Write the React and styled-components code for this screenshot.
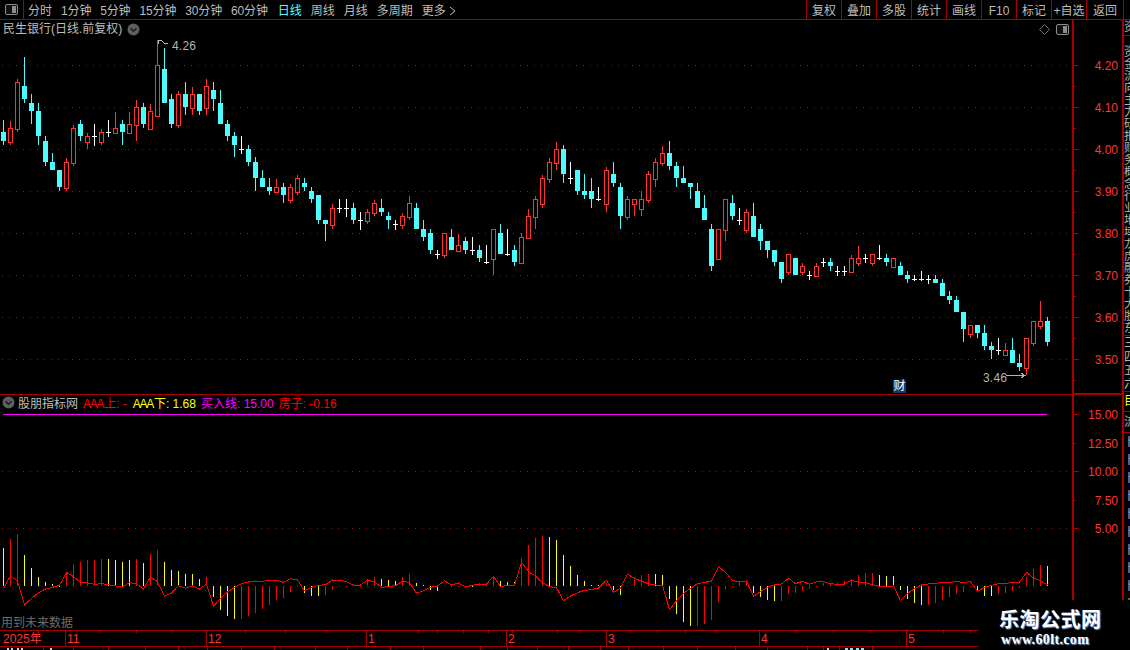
import React from "react";
import styled, { createGlobalStyle } from "styled-components";

const RED_LINE = "#a80000";
const GRID = "#8c1616";
const SANS = `"Liberation Sans", "Noto Sans CJK SC", sans-serif`;

const GlobalStyle = createGlobalStyle`
  html, body { margin: 0; padding: 0; background: #000; }
  body { font-family: ${SANS}; }
`;

const Page = styled.div`
  position: relative;
  width: 1130px;
  height: 650px;
  overflow: hidden;
  background: #000;
  color: #bdbdbd;
  font-size: 12px;
  display: flex;
  flex-direction: column;
`;

const Toolbar = styled.div`
  height: 19px;
  flex: none;
  display: flex;
  align-items: stretch;
  border-bottom: 1px solid ${RED_LINE};
`;
const LayoutCell = styled.div`
  width: 23px;
  display: flex;
  align-items: center;
  justify-content: center;
  border-right: 1px solid ${RED_LINE};
`;
const PeriodList = styled.div`
  display: flex;
  align-items: center;
  gap: 9px;
  margin-left: 4px;
  padding-top: 3px;
  box-sizing: border-box;
`;
const PeriodTab = styled.span`
  color: ${(p) => (p.$active ? "#55ffff" : "#bdbdbd")};
  white-space: nowrap;
  line-height: 16px;
  letter-spacing: ${(p) => (p.$digits ? "-0.15px" : "0")};
  margin-left: ${(p) => (p.$active ? "1px" : "0")};
`;
const MoreTab = styled(PeriodTab)`
  display: inline-flex;
  align-items: center;
  gap: 3px;
`;
const ActionGroup = styled.div`
  margin-left: auto;
  margin-right: 6px;
  display: flex;
  border-right: 1px solid ${RED_LINE};
`;
const ActionButton = styled.div`
  width: ${(p) => (p.$wide ? 36 : 34)}px;
  border-left: 1px solid ${RED_LINE};
  display: flex;
  align-items: center;
  justify-content: center;
  white-space: nowrap;
  line-height: 16px;
  padding-top: 3px;
`;

const Workspace = styled.div`
  flex: 1;
  min-height: 0;
  display: flex;
`;
const ChartColumn = styled.div`
  width: 1072px;
  flex: none;
  display: flex;
  flex-direction: column;
`;
const PricePane = styled.div`
  position: relative;
  height: 374px;
  flex: none;
  border-bottom: 1px solid ${RED_LINE};
`;
const IndicatorPane = styled.div`
  position: relative;
  height: 235px;
  flex: none;
`;
const ChartSvg = styled.svg`
  display: block;
  flex: none;
  shape-rendering: crispEdges;
`;
const PaneTitle = styled.div`
  position: absolute;
  left: 3px;
  top: 1px;
  display: flex;
  align-items: center;
  gap: 5px;
  line-height: 16px;
  white-space: nowrap;
`;
const PaneTools = styled.div`
  position: absolute;
  right: 3px;
  top: 4px;
  display: flex;
  align-items: center;
  gap: 6px;
`;
const EventBadge = styled.div`
  position: absolute;
  left: 893px;
  top: 360px;
  width: 13px;
  height: 13px;
  background: #0b3c6c;
  color: #fff;
  line-height: 13px;
  text-align: center;
`;
const Legend = styled.div`
  position: absolute;
  left: 2px;
  top: -1px;
  display: flex;
  align-items: center;
  height: 16px;
  white-space: nowrap;
`;
const LegendName = styled.span`
  margin: 0 5px 0 3px;
`;
const LegendItem = styled.span`
  color: ${(p) => p.$color};
  margin-right: ${(p) => p.$gap}px;
`;
const TightLatin = styled.span`
  letter-spacing: -1.3px;
  margin-right: 1px;
`;
const FutureNote = styled.div`
  position: absolute;
  left: 1px;
  bottom: -1px;
  color: #6c6c6c;
  line-height: 16px;
`;
const DateAxis = styled.div`
  flex: 1;
  min-height: 0;
`;
const AxisColumn = styled.div`
  width: 48px;
  flex: none;
  border-left: 2px solid ${RED_LINE};
  display: flex;
  flex-direction: column;
`;
const IndicatorScale = styled(ChartSvg)`
  border-top: 2px solid ${RED_LINE};
`;
const AxisText = styled.text`
  fill: #ff3434;
  font-family: ${SANS};
  font-size: 12px;
  text-anchor: ${(p) => p.$anchor || "end"};
  shape-rendering: auto;
`;
const MarkText = styled.text`
  fill: #b4b4b4;
  font-family: ${SANS};
  font-size: 12px;
  letter-spacing: 0.2px;
`;

const SideStrip = styled.div`
  width: 6px;
  flex: none;
  border-left: 2px solid ${RED_LINE};
  display: flex;
  flex-direction: column;
  overflow: hidden;
`;
const StripRow = styled.div`
  height: ${(p) => p.$h}px;
  flex: none;
  overflow: hidden;
  white-space: nowrap;
  line-height: ${(p) => p.$h}px;
  font-size: 12px;
  color: ${(p) => p.$color || "#b4b4b4"};
  border-bottom: ${(p) => (p.$line ? `1px solid ${RED_LINE}` : "0")};
`;

const Watermark = styled.div`
  position: absolute;
  left: 978px;
  top: 600px;
  width: 152px;
  height: 50px;
  background: #000;
  color: #fff;
  display: flex;
  flex-direction: column;
  align-items: flex-start;
  padding: 7px 0 0 21px;
  box-sizing: border-box;
`;
const WatermarkTitle = styled.div`
  font-family: "Noto Sans CJK SC", sans-serif;
  font-weight: 700;
  font-size: 20px;
  line-height: 23px;
  letter-spacing: 0.5px;
  text-shadow: 1px 1px 1px #6f8fc0;
`;
const WatermarkUrl = styled.div`
  font-family: "Liberation Serif", serif;
  font-weight: 700;
  font-size: 14px;
  line-height: 16px;
  letter-spacing: 0.35px;
  margin: 2px 0 0 2px;
  text-shadow: 1px 1px 1px #6f8fc0;
`;

/* ---------- data: traced in 3x crop units, converted with an offset ---------- */
const seg = (off, rows) =>
  rows.map(([k, h, t, b, l]) => ({
    k,
    h: Math.round(off + h / 3),
    t: Math.round(off + t / 3),
    b: Math.round(off + b / 3),
    l: Math.round(off + l / 3),
  }));
const C = "c", R = "r", W = "w";
const candles = [
  ...seg(40, [
    [C,240,276,303,315],[R,243,264,306,315],[R,117,126,266,276],[C,51,138,177,189],[C,162,189,213,252],
    [C,189,213,288,315],[C,288,303,366,378],[C,339,366,390,390],[C,390,390,441,453],[R,354,366,443,453],
    [R,255,264,369,378],[C,240,252,288,303],[R,279,288,305,327],[W,252,288,288,315],[R,267,276,306,315],
    [W,240,276,276,288],[R,216,264,278,278],[C,240,252,276,315],[R,216,252,278,278],[R,180,201,254,303],
    [C,189,201,252,264],[R,192,213,266,266],[R,0,75,228,228],[C,24,87,189,189],[C,162,177,252,264],
    [R,153,162,254,264],[C,126,162,201,225],[R,141,162,204,225],[C,162,162,213,225],[R,117,138,204,225],
    [C,126,150,177,213],[C,150,189,252,252],[C,240,252,288,303],[C,276,288,315,351],[W,288,327,327,339],
    [C,315,327,366,378],[C,351,366,414,453],[C,390,414,441,441],[C,414,441,453,465],
  ]),
  ...seg(140, [
    [R,117,141,156,156],[C,129,141,165,189],[R,132,141,180,189],[R,105,114,156,165],[C,114,129,141,153],
    [C,141,153,177,189],[C,165,165,240,252],[C,240,240,252,303],[R,192,204,255,267],[W,177,204,204,216],
    [W,177,204,204,228],[C,189,204,240,252],[W,216,240,240,267],[R,207,216,243,252],[R,180,189,219,228],
    [C,177,204,216,228],[C,216,228,240,267],[W,240,252,252,267],[R,219,228,255,267],[R,168,189,231,240],
    [C,189,204,267,267],[C,240,267,291,303],[C,267,279,330,342],[W,330,342,342,354],[R,279,279,345,354],
    [C,267,291,330,330],[R,282,315,333,333],[C,291,303,330,342],[W,291,330,330,342],[C,315,330,354,366],
    [W,315,366,366,369],[R,267,267,357,405],[C,252,279,342,342],[W,267,342,342,345],[C,315,330,366,378],
    [R,279,291,369,369],[R,207,228,294,294],[R,168,177,231,267],
  ]),
  ...seg(130, [
    [R,135,144,222,234],[R,84,96,147,159],[R,36,57,99,120],[C,45,57,132,159],[W,96,144,144,159],
    [C,120,120,183,195],[C,132,183,195,207],[C,144,183,207,234],[W,171,207,207,210],[R,111,120,222,246],
    [C,96,132,159,171],[C,159,171,258,297],[R,198,207,261,270],[R,207,207,222,258],[R,183,207,237,258],
    [R,123,132,210,219],[R,84,96,147,171],[R,48,69,99,108],[C,33,69,108,120],[C,96,108,144,171],
    [C,108,144,159,159],[C,159,159,171,207],[C,159,183,234,234],[C,195,234,270,270],[C,282,297,408,423],
    [R,297,297,387,387],[R,207,207,300,333],[C,195,219,258,270],[W,234,270,270,282],[R,237,246,300,309],
    [C,219,258,321,321],[C,282,297,333,360],[C,333,333,360,384],
  ]),
  ...seg(230, [
    [C,60,60,96,108],[C,96,96,147,159],[R,72,72,126,135],[C,84,84,135,135],[R,99,108,126,135],
    [W,123,135,135,147],[R,99,108,138,138],[W,84,96,96,108],[C,84,96,108,123],[W,108,123,123,135],
    [W,108,123,123,135],[R,75,84,126,126],[R,48,84,99,108],[W,72,84,84,96],[R,72,72,99,108],
    [W,45,84,84,87],[C,72,84,96,108],[R,84,84,111,111],[C,96,108,135,135],[C,123,135,147,159],
    [W,135,147,147,150],[W,123,147,147,150],[W,135,147,147,159],[C,135,147,159,159],[C,147,159,198,198],
    [C,183,198,210,222],[C,198,210,246,246],[C,246,246,297,336],[R,285,285,312,324],[C,285,285,309,324],
    [C,285,309,348,360],[C,336,348,360,387],[W,324,360,360,372],[R,339,360,375,375],[C,324,360,399,399],
    [C,372,399,411,423],[R,324,324,414,435],[R,273,273,339,348],[R,213,273,288,297],[C,261,273,336,348],
  ]),
];

const Y = "#ffff00", D = "#ff0000";
const bars = [
  [Y,54],[D,27],[D,12],[Y,75],[Y,114],[Y,141],[Y,156],[Y,162],[Y,167],[D,126],[D,102],[D,96],[D,90],[D,90],[D,87],
  [Y,87],[Y,90],[Y,96],[Y,90],[D,87],[Y,99],[D,72],[D,60],[Y,96],[Y,120],[Y,123],[Y,132],[Y,132],[Y,147],[D,141],
  [Y,201],[Y,240],[Y,258],[Y,267],[D,267],[D,258],[D,249],[D,237],[D,225],[D,210],[D,204],[D,186],[D,171],[Y,189],
  [Y,198],[Y,198],[D,195],[D,180],[D,170],[D,170],[Y,163],[D,167],[D,150],[D,140],
  [Y,147],[Y,150],[Y,153],[D,141],[D,132],[Y,159],[Y,165],[Y,180],[Y,183],[D,165],[D,167],[D,167],[Y,172],[Y,171],
  [D,160],[D,160],[D,138],[Y,153],[Y,156],[Y,156],[D,84],[D,45],[D,24],[D,18],[Y,21],[Y,30],[Y,75],[Y,108],[Y,135],
  [Y,153],[Y,165],[Y,165],[D,160],[Y,180],[Y,195],[D,165],[D,141],[D,135],[D,132],[Y,132],[Y,135],[Y,207],[Y,252],
  [Y,276],[Y,288],[D,288],[D,282],[D,270],[D,216],[D,177],[D,167],[D,156],[D,150],
  [Y,188],[Y,201],[Y,210],[Y,213],[D,213],[D,192],[D,189],[D,183],[D,177],[D,167],[D,160],[D,160],[D,158],[D,153],
  [D,147],[D,135],[D,129],[D,129],[Y,135],[Y,138],[Y,138],[Y,180],[Y,207],[Y,219],[Y,225],[D,225],[D,219],[D,210],
  [D,201],[D,192],[D,186],[D,168],[Y,186],[Y,198],[Y,198],[D,192],[D,189],[D,183],[D,174],[D,141],[D,117],[D,105],[Y,108],
];
const lineZ = [
  175,138,153,225,205,188,177,172,166,127,140,157,159,163,161,164,168,171,158,161,177,141,155,199,189,167,175,168,177,162,
  229,205,186,172,161,156,154,154,151,151,157,146,150,182,172,166,164,150,151,155,165,165,150,156,
  172,170,167,153,158,190,182,172,168,152,165,159,171,166,162,162,139,170,166,166,96,125,138,158,170,173,212,198,188,181,
  179,174,151,187,175,133,145,154,161,165,166,239,212,190,175,161,157,154,110,127,152,155,153,
  199,185,172,165,162,145,161,154,163,155,155,161,163,162,151,156,158,164,169,169,168,212,190,176,165,162,160,157,157,155,
  157,155,184,172,166,161,160,158,157,127,144,152,165,
];

const px = (i) => Math.floor(3.4 + 7.007 * i);
const priceGrid = [65, 107, 149, 191, 233, 275, 317, 359];
const priceLabels = ["4.20","4.10","4.00","3.90","3.80","3.70","3.60","3.50"];
const indTicks = [[414,"15.00"],[443,"12.50"],[471,"10.00"],[500,"7.50"],[528,"5.00"]];

const Candle = ({ c, i }) => {
  const x = px(i);
  const col = c.k === C ? "#4dfdfd" : c.k === R ? "#ff3232" : "#ffffff";
  if (c.k === W) {
    return (
      <g fill={col}>
        <rect x={x} y={c.h} width={1} height={Math.max(1, c.l - c.h + 1)} />
        <rect x={x - 2} y={c.t} width={5} height={1} />
      </g>
    );
  }
  return (
    <g>
      <rect x={x} y={c.h} width={1} height={Math.max(1, c.l - c.h)} fill={col} />
      {c.k === C ? (
        <rect x={x - 2} y={c.t} width={5} height={Math.max(1, c.b - c.t)} fill={col} />
      ) : (
        <rect x={x - 2 + 0.5} y={c.t + 0.5} width={4} height={Math.max(1, c.b - c.t)} fill="#000" stroke={col} strokeWidth={1} />
      )}
    </g>
  );
};

const PanelIcon = () => (
  <svg width="13" height="11" viewBox="0 0 13 11" style={{ display: "block" }}>
    <rect x="0.5" y="0.5" width="12" height="10" rx="1.5" fill="#111" stroke="#8c8c8c" />
    <rect x="7" y="2" width="4" height="7" fill="#8c8c8c" />
  </svg>
);
const ChevronDot = () => (
  <svg width="13" height="13" viewBox="0 0 13 13" style={{ display: "block" }}>
    <circle cx="6.5" cy="6.5" r="6" fill="#5e5e5e" />
    <path d="M3.5 5.2 L6.5 8.2 L9.5 5.2" fill="none" stroke="#1c1c1c" strokeWidth="1.4" />
  </svg>
);
const DiamondIcon = () => (
  <svg width="11" height="11" viewBox="0 0 11 11" style={{ display: "block" }}>
    <path d="M5.5 0.5 L10.5 5.5 L5.5 10.5 L0.5 5.5 Z" fill="none" stroke="#707070" />
  </svg>
);

const PriceChart = () => (
  <ChartSvg width="1072" height="374" viewBox="0 20 1072 374">
    {priceGrid.map((y) => (
      <line key={y} x1="2" x2="1072" y1={y + 0.5} y2={y + 0.5} stroke={GRID} strokeDasharray="1 6" />
    ))}
    {candles.map((c, i) => <Candle key={i} c={c} i={i} />)}
    <path d="M158 40 L162 41 L164 43 L168 44 M158 40 L158 44" fill="none" stroke="#b4b4b4" />
    <MarkText x="172" y="50">4.26</MarkText>
    <MarkText x="983" y="382">3.46</MarkText>
    <path d="M1006 375.5 L1025 375.5 M1021 373 L1025 375.5 L1021 378" fill="none" stroke="#b4b4b4" />
  </ChartSvg>
);

const IndicatorChart = () => (
  <ChartSvg width="1072" height="235" viewBox="0 395 1072 235">
    <line x1="3" x2="1047" y1="414.5" y2="414.5" stroke="#ff00ff" />
    {[471, 528].map((y) => (
      <line key={y} x1="2" x2="1072" y1={y + 0.5} y2={y + 0.5} stroke={GRID} strokeDasharray="1 6" />
    ))}
    {bars.map(([color, z], i) => {
      const y = Math.round(530 + z / 3);
      const top = Math.min(y, 586);
      return <rect key={i} x={px(i)} y={top} width={1} height={Math.max(1, Math.abs(y - 586))} fill={color} />;
    })}
    <polyline
      fill="none"
      stroke="#ff0000"
      points={lineZ.map((z, i) => `${px(i) + 0.5},${(530 + z / 3).toFixed(1)}`).join(" ")}
    />
  </ChartSvg>
);

const majors = [
  [65, "11"], [206, "12"], [366, "1"], [506, "2"], [606, "3"], [759, "4"], [906, "5"],
];
const topTicks = [38,100,136,171,245,285,326,418,437,463,488,512,557,580,630,657,685,716,796,833,870,943,970];
const lowTicks = [11,43,73,108,145,178,207,241,274,315,347,390,423,480,507,537,568,600,628,663,697,735,767,807,823,839,872];

const DateChart = () => (
  <ChartSvg width="1072" height="20" viewBox="0 630 1072 20">
    <rect x="0" y="630" width="1072" height="1" fill={RED_LINE} />
    <rect x="0" y="646" width="1072" height="1" fill={RED_LINE} />
    {topTicks.map((x) => <rect key={x} x={x} y="631" width="1" height="2" fill={RED_LINE} />)}
    {lowTicks.map((x) => <rect key={x} x={x} y="647" width="1" height="3" fill={RED_LINE} />)}
    {majors.map(([x, t]) => (
      <g key={x}>
        <rect x={x} y="631" width="1" height="15" fill={RED_LINE} />
        <AxisText $anchor="start" x={x + 2} y="643">{t}</AxisText>
      </g>
    ))}
    <AxisText $anchor="start" x="3" y="643">2025年</AxisText>
    {[7, 11, 17, 21, 50, 827].map((x) => <rect key={x} x={x} y="648" width="2" height="2" fill="#cfcfcf" />)}
    {[845, 850, 856, 861].map((x) => <rect key={x} x={x} y="648" width="3" height="2" fill="#7fe8e8" />)}
  </ChartSvg>
);

const periods = ["分时","1分钟","5分钟","15分钟","30分钟","60分钟"];
const after = ["周线","月线","多周期"];
const actions = ["复权","叠加","多股","统计","画线","F10","标记","+自选","返回"];
const upper = "资金流向主力研报财务概念行业地域龙虎融券十大股东";
const middle = "三四五六";
const lower = "卜卜卜卜卜卜卜卜卜卜";

export default function App() {
  return (
    <Page>
      <GlobalStyle />
      <Toolbar>
        <LayoutCell><PanelIcon /></LayoutCell>
        <PeriodList>
          {periods.map((p) => <PeriodTab key={p} $digits={/\d/.test(p)}>{p}</PeriodTab>)}
          <PeriodTab $active>日线</PeriodTab>
          {after.map((p) => <PeriodTab key={p}>{p}</PeriodTab>)}
          <MoreTab>
            更多
            <svg width="7" height="10" viewBox="0 0 7 10" style={{ display: "block" }}>
              <path d="M1 1 L6 5 L1 9" fill="none" stroke="#bdbdbd" />
            </svg>
          </MoreTab>
        </PeriodList>
        <ActionGroup>
          {actions.map((a, i) => (
            <ActionButton key={a} $wide={i === 8}>{a}</ActionButton>
          ))}
        </ActionGroup>
      </Toolbar>
      <Workspace>
        <ChartColumn>
          <PricePane>
            <PriceChart />
            <PaneTitle>民生银行(日线.前复权)<ChevronDot /></PaneTitle>
            <PaneTools><DiamondIcon /><PanelIcon /></PaneTools>
            <EventBadge>财</EventBadge>
          </PricePane>
          <IndicatorPane>
            <IndicatorChart />
            <Legend>
              <ChevronDot />
              <LegendName>股朋指标网</LegendName>
              <LegendItem $color="#ff0000" $gap={6}><TightLatin>AAA</TightLatin>上: -</LegendItem>
              <LegendItem $color="#ffff00" $gap={5}><TightLatin>AAA</TightLatin>下: 1.68</LegendItem>
              <LegendItem $color="#ff00ff" $gap={5}>买入线: 15.00</LegendItem>
              <LegendItem $color="#ff0000" $gap={0}>房子: -0.16</LegendItem>
            </Legend>
            <FutureNote>用到未来数据</FutureNote>
          </IndicatorPane>
          <DateAxis><DateChart /></DateAxis>
        </ChartColumn>
        <AxisColumn>
          <ChartSvg width="48" height="373" viewBox="1074 20 48 373">
            {priceGrid.map((y, i) => (
              <g key={y}>
                <rect x="1074" y={y} width="5" height="1" fill={RED_LINE} />
                <rect x="1074" y={y + 21} width="2" height="1" fill={RED_LINE} />
                <AxisText x="1118" y={y + 5}>{priceLabels[i]}</AxisText>
              </g>
            ))}
          </ChartSvg>
          <IndicatorScale width="48" height="205" viewBox="1074 395 48 205">
            {indTicks.map(([y, t]) => (
              <g key={y}>
                <rect x="1074" y={y} width={t === "12.50" || t === "7.50" ? 2 : 5} height="1" fill={RED_LINE} />
                <AxisText x="1118" y={y + 5}>{t}</AxisText>
              </g>
            ))}
          </IndicatorScale>
        </AxisColumn>
        <SideStrip>
          <StripRow $h={15} $line>资</StripRow>
          <StripRow $h={9} $line />
          {upper.split("").map((ch, i) => (
            <StripRow key={i} $h={i === 23 ? 13 : 12} $line={i === 23}>{ch}</StripRow>
          ))}
          {middle.split("").map((ch, i) => (
            <StripRow key={i} $h={i === 3 ? 13 : 14} $line={i === 3}>{ch}</StripRow>
          ))}
          <StripRow $h={19} $color="#ffff00" $line>目</StripRow>
          <StripRow $h={20} $line>流</StripRow>
          {lower.split("").map((ch, i) => <StripRow key={i} $h={18}>{ch}</StripRow>)}
        </SideStrip>
      </Workspace>
      <Watermark>
        <WatermarkTitle>乐淘公式网</WatermarkTitle>
        <WatermarkUrl>www.60lt.com</WatermarkUrl>
      </Watermark>
    </Page>
  );
}
